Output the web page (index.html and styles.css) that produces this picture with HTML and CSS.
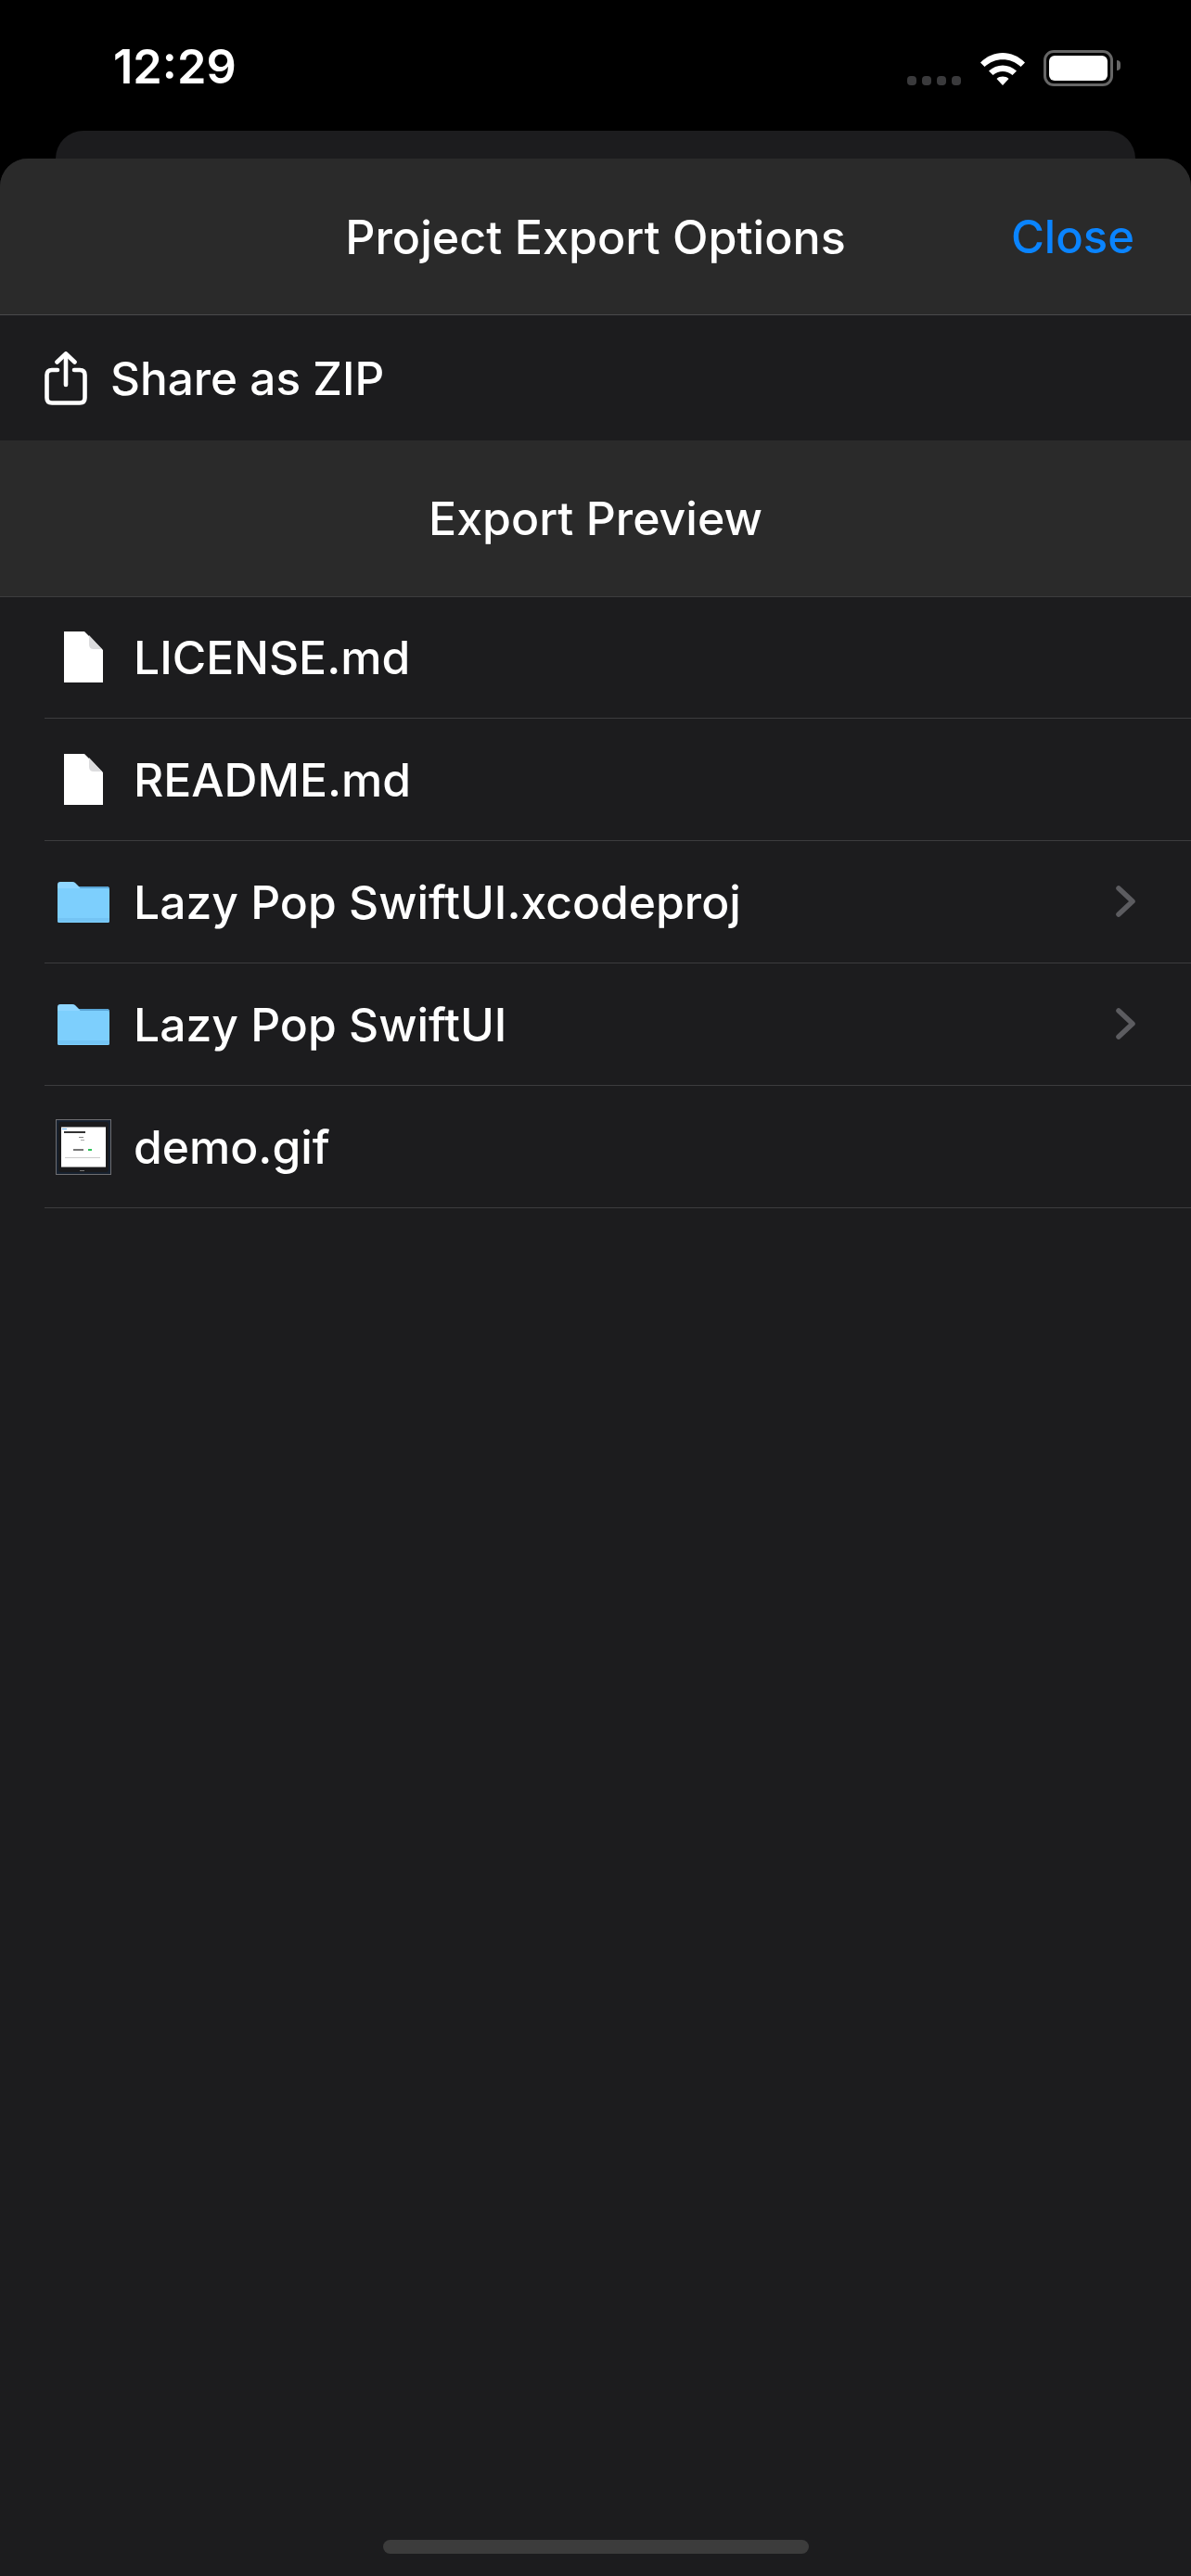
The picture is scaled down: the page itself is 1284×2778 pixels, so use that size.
FILE: index.html
```html
<!DOCTYPE html>
<html>
<head>
    <title>Project Export Options</title>
    <link rel="stylesheet" href="styles.css">
</head>
<body>
    <div class="status-bar">
        <span class="clock">12:29</span>
        <div class="status-icons">
            <div class="signal"><i></i><i></i><i></i><i></i></div>
            <svg class="wifi" width="50" height="38" viewBox="0 0 50 38">
                <path d="M1 12.5 C14.5 -1.5 35.5 -1.5 49 12.5 L44.5 17 C33.5 6.5 16.5 6.5 5.5 17 Z" fill="#fff"/>
                <path d="M10 21.5 C18.5 13.5 31.5 13.5 40 21.5 L35.5 26 C29 20.5 21 20.5 14.5 26 Z" fill="#fff"/>
                <path d="M18.5 30 C22 26.8 28 26.8 31.5 30 L25 37 Z" fill="#fff"/>
            </svg>
            <div class="battery">
                <div class="battery-level"></div>
                <div class="battery-cap"></div>
            </div>
        </div>
    </div>

    <div class="sheet-behind"></div>

    <div class="sheet">
        <div class="nav-header">
            <h1>Project Export Options</h1>
            <span class="close-btn">Close</span>
        </div>

        <div class="share-row">
            <svg width="46" height="58" viewBox="0 0 46 58" fill="none" stroke="#fff" stroke-width="4.6" stroke-linecap="round" stroke-linejoin="round">
                <path d="M14 20 H8 Q2.5 20 2.5 25.5 V50 Q2.5 55.5 8 55.5 H38 Q43.500 55.500 43.500 50 V25.500 Q43.500 20 38 20 H32"/>
                <path d="M23 36 V3"/>
                <path d="M13.500 11.500 L23 2.500 L32.500 11.500"/>
            </svg>
            <span>Share as ZIP</span>
        </div>

        <div class="section-header">Export Preview</div>

        <ul class="file-list">
            <li>
                <span class="file-icon">
                    <svg width="42" height="55" viewBox="0 0 42 55">
                        <path d="M0 0 H22 L42 20 V55 H0 Z" fill="#fff"/>
                        <path d="M27 4 L41 19 H32 Q27 19 27 14 Z" fill="#dcdcde"/>
                    </svg>
                </span>
                LICENSE.md
            </li>
            <li>
                <span class="file-icon">
                    <svg width="42" height="55" viewBox="0 0 42 55">
                        <path d="M0 0 H22 L42 20 V55 H0 Z" fill="#fff"/>
                        <path d="M27 4 L41 19 H32 Q27 19 27 14 Z" fill="#dcdcde"/>
                    </svg>
                </span>
                README.md
            </li>
            <li>
                <span class="file-icon">
                    <svg width="56" height="44" viewBox="0 0 56 44">
                        <path d="M0 3 Q0 0 3 0 H16 Q18 0 19 1 L23 5 H53 Q56 5 56 8 V42 Q56 44 54 44 H2 Q0 44 0 42 Z" fill="#8fd6ff"/>
                        <path d="M23 5 H53 Q56 5 56 8 V9 H26 Z" fill="#5aa5d6"/>
                        <path d="M0 7 H54 Q56 7 56 9 V42 Q56 44 54 44 H2 Q0 44 0 42 Z" fill="#7dcffd"/>
                        <rect x="0" y="39" width="56" height="4" fill="#74c4f4"/>
                    </svg>
                </span>
                Lazy Pop SwiftUI.xcodeproj
                <svg class="chevron" width="24" height="36" viewBox="0 0 24 36">
                    <path d="M4 4 L19 18 L4 32" fill="none" stroke="#5c5c60" stroke-width="5.500" stroke-linecap="round" stroke-linejoin="round"/>
                </svg>
            </li>
            <li>
                <span class="file-icon">
                    <svg width="56" height="44" viewBox="0 0 56 44">
                        <path d="M0 3 Q0 0 3 0 H16 Q18 0 19 1 L23 5 H53 Q56 5 56 8 V42 Q56 44 54 44 H2 Q0 44 0 42 Z" fill="#8fd6ff"/>
                        <path d="M23 5 H53 Q56 5 56 8 V9 H26 Z" fill="#5aa5d6"/>
                        <path d="M0 7 H54 Q56 7 56 9 V42 Q56 44 54 44 H2 Q0 44 0 42 Z" fill="#7dcffd"/>
                        <rect x="0" y="39" width="56" height="4" fill="#74c4f4"/>
                    </svg>
                </span>
                Lazy Pop SwiftUI
                <svg class="chevron" width="24" height="36" viewBox="0 0 24 36">
                    <path d="M4 4 L19 18 L4 32" fill="none" stroke="#5c5c60" stroke-width="5.500" stroke-linecap="round" stroke-linejoin="round"/>
                </svg>
            </li>
            <li>
                <span class="file-icon">
                    <!-- little thumbnail of the gif -->
                    <svg width="60" height="60" viewBox="0 0 60 60">
                        <rect x="0.500" y="0.500" width="59" height="59" fill="#16202e" stroke="#6e6e72"/>
                        <rect x="3" y="3" width="54" height="54" rx="3" fill="#1a1a1c"/>
                        <rect x="6" y="8" width="48" height="44" fill="#fff"/>
                        <rect x="6" y="8" width="48" height="1" fill="#999"/>
                        <rect x="6" y="51" width="48" height="1" fill="#999"/>
                        <rect x="7" y="10" width="5" height="1" fill="#6ab0ee"/>
                        <rect x="9" y="13" width="23" height="2" fill="#333"/>
                        <rect x="25" y="19" width="5" height="1" fill="#888"/>
                        <rect x="27" y="22" width="4" height="1" fill="#aaa"/>
                        <rect x="19" y="32" width="11" height="2" fill="#777"/>
                        <rect x="35" y="32" width="4" height="2" fill="#2fc45a"/>
                        <rect x="10" y="41" width="38" height="1" fill="#ccc"/>
                        <rect x="26" y="55" width="5" height="1" fill="#777"/>
                    </svg>
                </span>
                demo.gif
            </li>
        </ul>
    </div>

    <div class="home-indicator"></div>
</body>
</html>
```

FILE: styles.css
```css
/* Page frame */
html, body {
    margin: 0;
    padding: 0;
}

body {
    position: relative;
    width: 1284px;
    height: 2778px;
    overflow: hidden;
    background-color: #000;
    color: #fff;
    font-family: Inter, "Noto Sans", sans-serif;
}

/* Status bar */
.status-bar {
    height: 141px;
    box-sizing: border-box;
    padding: 42px 84px 0 122px;
    display: flex;
    justify-content: space-between;
    align-items: flex-start;
}

.clock {
    font-size: 50.5px;
    line-height: 60px;
    font-weight: 600;
}

.status-icons {
    display: flex;
    align-items: flex-end;
    padding-top: 12px;
}

.signal {
    display: flex;
    gap: 6px;
    margin-right: 20px;
    padding-bottom: 1px;
}

.signal i {
    width: 10px;
    height: 10px;
    border-radius: 4px;
    background-color: #3a3a3c;
}

.wifi {
    margin-right: 19px;
}

.battery {
    position: relative;
    box-sizing: border-box;
    width: 75px;
    height: 39px;
    padding: 3px;
    border: 3px solid #666;
    border-radius: 11px;
}

.battery-level {
    height: 100%;
    background-color: #fff;
    border-radius: 6px;
}

.battery-cap {
    position: absolute;
    top: 8px;
    right: -11px;
    width: 4px;
    height: 11px;
    background-color: #666;
    border-radius: 0 6px 6px 0;
}

/* Card peeking out behind the sheet */
.sheet-behind {
    height: 60px;
    margin: 0 60px;
    background-color: #1c1c1e;
    border-radius: 30px 30px 0 0;
}

/* Sheet */
.sheet {
    position: absolute;
    top: 171px;
    left: 0;
    right: 0;
    bottom: 0;
    background-color: #1c1c1e;
    border-radius: 30px 30px 0 0;
    overflow: hidden;
}

.nav-header {
    position: relative;
    height: 168px;
    display: flex;
    align-items: center;
    justify-content: center;
    background-color: #2a2a2a;
    border-bottom: 1px solid #4a4a4c;
}

.nav-header h1 {
    margin: 0;
    font-size: 50.2px;
    font-weight: 500;
}

.close-btn {
    position: absolute;
    right: 61px;
    top: 50%;
    transform: translateY(-50%);
    font-size: 49px;
    font-weight: 500;
    color: #0a84ff;
}

.share-row {
    height: 135px;
    display: flex;
    align-items: center;
    gap: 25px;
    padding-left: 48px;
    font-size: 49.5px;
    font-weight: 500;
}

.section-header {
    height: 168px;
    display: flex;
    align-items: center;
    justify-content: center;
    background-color: #2a2a2a;
    border-bottom: 1px solid #3c3c3e;
    font-size: 50px;
    font-weight: 500;
}

/* File rows */
.file-list {
    list-style-type: none;
    margin: -1px 0 0;
    padding: 0 0 0 48px;
}

.file-list li {
    position: relative;
    height: 131px;
    display: flex;
    align-items: center;
    border-bottom: 1px solid #3c3c3e;
    font-size: 49.8px;
    font-weight: 500;
}

.file-icon {
    width: 60px;
    margin: 0 24px 0 12px;
    display: flex;
    justify-content: center;
}

.chevron {
    position: absolute;
    right: 58px;
    top: 47px;
}

.home-indicator {
    position: absolute;
    left: 413px;
    bottom: 24px;
    width: 459px;
    height: 15px;
    border-radius: 8px;
    background-color: #3c3c3c;
}
```
